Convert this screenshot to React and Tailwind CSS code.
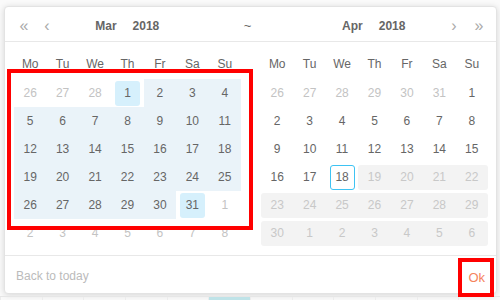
import React from "react";

const WEEK = ["Mo", "Tu", "We", "Th", "Fr", "Sa", "Su"];

// left month: March 2018 (range 1 -> 31)
const MAR = [
  [26, 27, 28, 1, 2, 3, 4],
  [5, 6, 7, 8, 9, 10, 11],
  [12, 13, 14, 15, 16, 17, 18],
  [19, 20, 21, 22, 23, 24, 25],
  [26, 27, 28, 29, 30, 31, 1],
  [2, 3, 4, 5, 6, 7, 8],
];

const APR = [
  [26, 27, 28, 29, 30, 31, 1],
  [2, 3, 4, 5, 6, 7, 8],
  [9, 10, 11, 12, 13, 14, 15],
  [16, 17, 18, 19, 20, 21, 22],
  [23, 24, 25, 26, 27, 28, 29],
  [30, 1, 2, 3, 4, 5, 6],
];

function Header({ side, month }) {
  return (
    <div className="grid h-[34px] w-[227px] grid-cols-[60px_1fr_60px] items-center pt-[3px]">
      <div className="flex items-center text-[16px] text-[#aaa]">
        {side === "left" && (
          <>
            <span className="ml-[2px] w-[16px] text-center">«</span>
            <span className="ml-[7px] w-[16px] text-center">‹</span>
          </>
        )}
      </div>
      <div className="flex items-center justify-center gap-[16px] text-[12px] font-bold text-[#666]">
        <span>{month}</span>
        <span>2018</span>
      </div>
      <div className="flex items-center justify-end text-[16px] text-[#aaa]">
        {side === "right" && (
          <>
            <span className="w-[16px] text-center">›</span>
            <span className="ml-[9px] w-[16px] text-center">»</span>
          </>
        )}
      </div>
    </div>
  );
}

function Weekdays() {
  return (
    <div className="grid h-[28px] w-[227px] grid-cols-7 items-center text-center text-[12px] text-[#666]">
      {WEEK.map((w) => (
        <span key={w}>{w}</span>
      ))}
    </div>
  );
}

function MarchGrid() {
  return (
    <div className="flex w-[227px] flex-col">
      {MAR.map((row, r) => (
        <div key={r} className="grid h-[28px] grid-cols-7">
          {row.map((d, c) => {
            const out = (r === 0 && c < 3) || (r === 4 && c === 6) || r === 5;
            const end = (r === 0 && c === 3) || (r === 4 && c === 5);
            const inRange = !out && !end;
            return (
              <div
                key={c}
                className={`flex items-center justify-center ${inRange ? "bg-[#eaf3f9]" : ""}`}
              >
                <span
                  className={`flex h-[25px] w-[25px] items-center justify-center rounded-[3px] text-[12px] ${
                    end ? "bg-[#d6f0fc] text-[#666]" : out ? "text-[#c3c3c3]" : "text-[#666]"
                  }`}
                >
                  {d}
                </span>
              </div>
            );
          })}
        </div>
      ))}
    </div>
  );
}

function AprilGrid() {
  return (
    <div className="flex w-[227px] flex-col">
      {APR.map((row, r) => {
        if (r < 3) {
          return (
            <div key={r} className="grid h-[28px] grid-cols-7 items-center text-center text-[12px]">
              {row.map((d, c) => (
                <span key={c} className={r === 0 && c < 6 ? "text-[#c3c3c3]" : "text-[#666]"}>
                  {d}
                </span>
              ))}
            </div>
          );
        }
        if (r === 3) {
          return (
            <div key={r} className="grid h-[28px] grid-cols-7 items-center text-center text-[12px]">
              <span className="text-[#666]">16</span>
              <span className="text-[#666]">17</span>
              <div className="flex justify-center">
                <span className="flex h-[25px] w-[25px] items-center justify-center rounded-[3px] border border-[#3ec3f3] text-[#666]">
                  18
                </span>
              </div>
              <div className="col-span-4 grid h-[25px] grid-cols-4 items-center rounded-[3px] bg-[#f3f3f3] text-[#c8c8c8]">
                {row.slice(3).map((d) => (
                  <span key={d}>{d}</span>
                ))}
              </div>
            </div>
          );
        }
        return (
          <div key={r} className="flex h-[28px] items-center">
            <div className="grid h-[25px] w-full grid-cols-7 items-center rounded-[3px] bg-[#f3f3f3] text-center text-[12px] text-[#c8c8c8]">
              {row.map((d, c) => (
                <span key={c}>{d}</span>
              ))}
            </div>
          </div>
        );
      })}
    </div>
  );
}

export default function App() {
  return (
    <div
      className="relative flex h-[300px] w-[500px] flex-col overflow-hidden bg-[#fafafa]"
      style={{ fontFamily: '"Liberation Sans", Arial, sans-serif' }}
    >
      {/* picker popup */}
      <div className="ml-[4px] mt-[6px] flex h-[289px] w-[493px] flex-col rounded-[4px] border border-[#e3e3e3] bg-white shadow-[0_1px_6px_rgba(0,0,0,0.15)]">
        <div className="flex border-b border-[#e8e8e8] px-[9px]">
          <Header side="left" month="Mar" />
          <div className="flex w-[20px] items-center justify-center pt-[3px] text-[13px] text-[#666]">
            <span className="mr-[6px]">~</span>
          </div>
          <Header side="right" month="Apr" />
        </div>

        <div className="flex gap-[20px] px-[9px] pt-[8px]">
          <div className="flex flex-col gap-[1px]">
            <Weekdays />
            <MarchGrid />
          </div>
          <div className="flex flex-col gap-[1px]">
            <Weekdays />
            <AprilGrid />
          </div>
        </div>

        <div className="mt-[8px] flex flex-1 items-center justify-between border-t border-[#e8e8e8] px-[11px] pt-[3px]">
          <span className="text-[12px] text-[#bbb]">Back to today</span>
          <span className="mt-[3px] text-[13px] text-[#f5845c]">Ok</span>
        </div>
      </div>

      {/* table row peeking below */}
      <div className="mt-[2px] grid h-[4px] grid-cols-12 border-t border-[#e6e6e6]">
        {Array.from({ length: 12 }).map((_, i) => (
          <div key={i} className={`border-l border-[#ececec] ${i === 5 ? "bg-[#bfe3e8]" : ""}`} />
        ))}
      </div>

      {/* annotation boxes */}
      <div className="pointer-events-none absolute left-[7px] top-[69px] h-[161px] w-[246px] border-[4px] border-[#ff0000]" />
      <div className="pointer-events-none absolute left-[458px] top-[258px] h-[39px] w-[36px] border-[4px] border-[#ff0000]" />
    </div>
  );
}
